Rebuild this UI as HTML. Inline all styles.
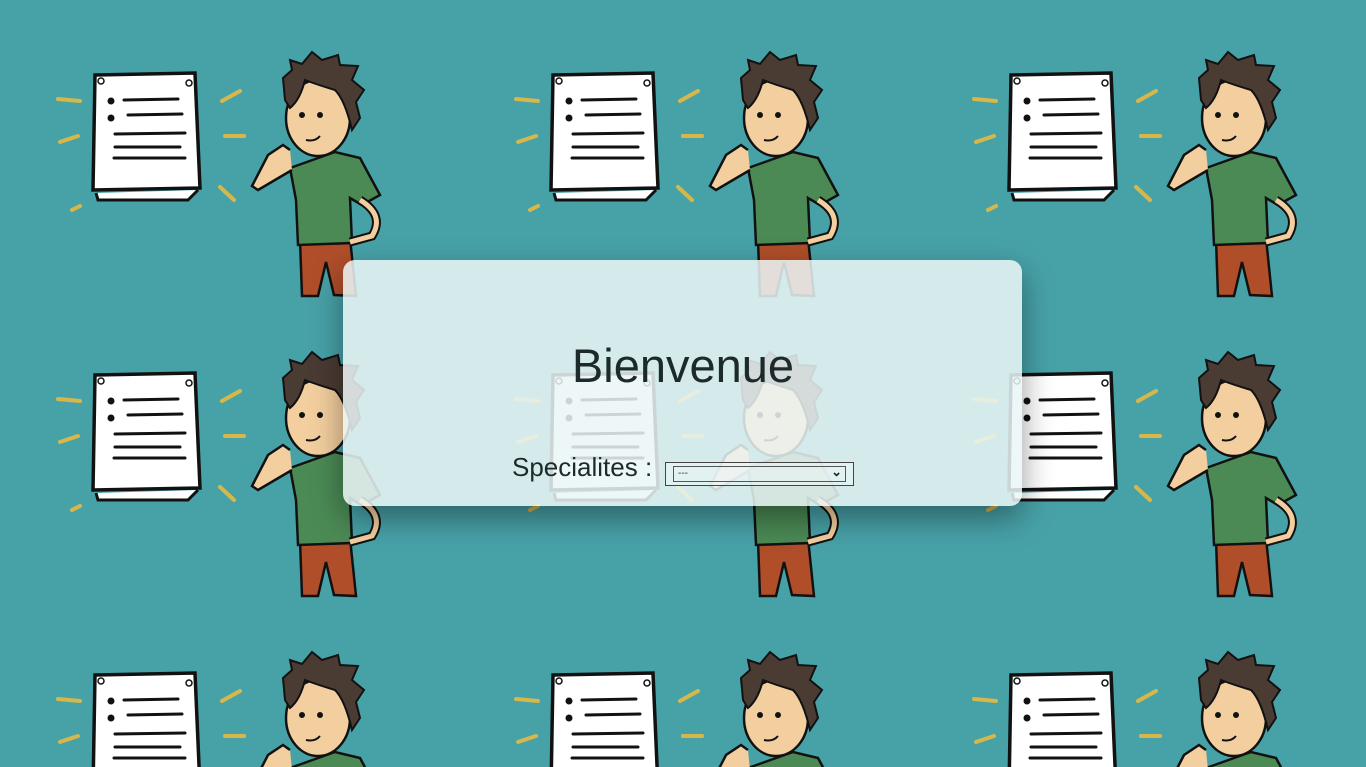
<!DOCTYPE html>
<html><head><meta charset="utf-8"><style>
html,body{margin:0;padding:0;width:1366px;height:767px;overflow:hidden;background:#47a2a8;font-family:"Liberation Sans",sans-serif}
svg.bg{position:absolute;left:0;top:0}
.card{position:absolute;left:343px;top:260px;width:679px;height:246px;border-radius:12px;background:rgba(235,246,246,0.86);box-shadow:0 12px 32px rgba(0,0,0,0.4)}
h1{position:absolute;left:0;width:100%;top:338px;margin:0;text-align:center;font-weight:normal;font-size:47px;color:#1d2a2c}
.sp{position:absolute;left:512px;top:452px;font-size:26px;color:#1d2a2c}
.sel{position:absolute;left:665px;top:462px;width:189px;height:24px;border:1px solid #444;background:rgba(235,245,245,0.6);box-sizing:border-box}
.sel .in{position:absolute;left:7px;top:3px;right:7px;bottom:3px;border:1px solid #555;font-size:10px;line-height:14px;padding-left:4px;color:#333}
.sel .ch{position:absolute;right:11px;top:1px;font-size:13px;font-weight:bold;color:#222}
</style></head><body>
<svg class="bg" width="1366" height="767">
<defs><pattern id="p" x="0" y="0" width="458" height="300" patternUnits="userSpaceOnUse">
<g stroke="#d8b74a" stroke-width="4" stroke-linecap="round">
<line x1="58" y1="99" x2="80" y2="101"/><line x1="60" y1="142" x2="78" y2="136"/><line x1="72" y1="210" x2="80" y2="206"/>
<line x1="222" y1="101" x2="240" y2="91"/><line x1="225" y1="136" x2="244" y2="136"/><line x1="220" y1="187" x2="234" y2="200"/>
</g>
<path d="M96 193 L98 200 L188 200 L198 190" fill="#fff" stroke="#111" stroke-width="3"/>
<path d="M95 75 L195 73 L200 188 L93 190 Z" fill="#fff" stroke="#111" stroke-width="3.5"/>
<circle cx="101" cy="81" r="3" fill="none" stroke="#111" stroke-width="1.5"/><circle cx="189" cy="83" r="3" fill="none" stroke="#111" stroke-width="1.5"/>
<circle cx="111" cy="101" r="3.5" fill="#111"/><circle cx="111" cy="118" r="3.5" fill="#111"/>
<g stroke="#111" stroke-width="3" stroke-linecap="round">
<line x1="124" y1="100" x2="178" y2="99"/><line x1="128" y1="115" x2="182" y2="114"/><line x1="115" y1="134" x2="185" y2="133"/><line x1="115" y1="147" x2="180" y2="147"/><line x1="114" y1="158" x2="185" y2="158"/>
</g>
<path d="M300 240 L350 238 L356 296 L334 295 L326 262 L318 296 L302 296 Z" fill="#b04e2a" stroke="#111" stroke-width="2.5"/>
<path d="M290 168 L335 152 L360 158 L380 195 L362 205 L350 198 L352 243 L298 245 L296 200 Z" fill="#4b8a55" stroke="#111" stroke-width="2.5"/>
<path d="M360 200 Q385 215 372 236 L350 242" fill="none" stroke="#111" stroke-width="9"/>
<path d="M360 200 Q385 215 372 236 L350 242" fill="none" stroke="#f3cf9f" stroke-width="5"/>
<path d="M292 170 L258 190 L252 186 L268 155 L283 145 L290 150" fill="#f3cf9f" stroke="#111" stroke-width="2.5"/>
<ellipse cx="318" cy="118" rx="32" ry="38" fill="#f3cf9f" stroke="#111" stroke-width="2.5"/>
<path d="M285 100 L283 78 L292 70 L290 60 L302 64 L312 52 L322 60 L338 55 L340 65 L358 66 L352 80 L364 90 L356 102 L360 118 L352 130 Q345 100 335 90 Q318 85 305 80 Q300 100 290 108 Z" fill="#4a3b33" stroke="#111" stroke-width="2"/>
<circle cx="302" cy="115" r="3" fill="#111"/><circle cx="320" cy="115" r="3" fill="#111"/>
<path d="M306 140 Q315 142 320 136" fill="none" stroke="#111" stroke-width="2"/>
</pattern></defs>
<rect width="1366" height="767" fill="url(#p)"/>
</svg>
<div class="card"></div>
<h1>Bienvenue</h1>
<div class="sp">Specialites :</div>
<div class="sel"><div class="in">---</div><div class="ch">&#8964;</div></div>
</body></html>
